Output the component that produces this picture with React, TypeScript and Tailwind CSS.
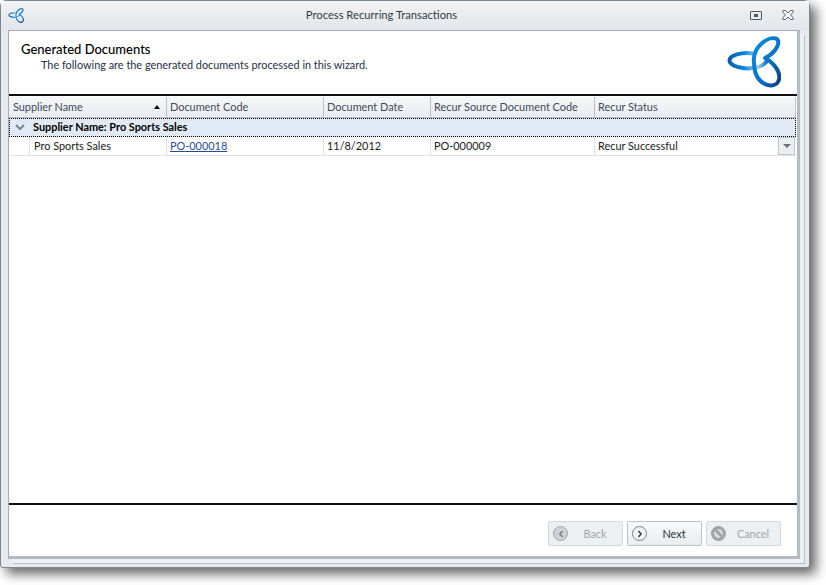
import { ChevronLeft, ChevronRight } from "lucide-react";

const font = { fontFamily: "Lato, sans-serif" };

function Logo({ className, id }: { className: string; id: string }) {
    return (
        <svg viewBox="0 0 54 52" className={className} fill="none">
            <defs>
                <linearGradient id={`${id}A`} x1="0" y1="0" x2="1" y2="1">
                    <stop offset="0" stopColor="#0a8fe6" />
                    <stop offset="0.55" stopColor="#0672c8" />
                    <stop offset="1" stopColor="#0b3f84" />
                </linearGradient>
                <linearGradient id={`${id}B`} x1="0" y1="0" x2="1" y2="0">
                    <stop offset="0" stopColor="#0a5fae" />
                    <stop offset="0.4" stopColor="#0a86dc" />
                    <stop offset="0.75" stopColor="#a8d4f4" />
                    <stop offset="1" stopColor="#0b6ec4" />
                </linearGradient>
            </defs>
            <path d="M27 17.500C14 15.500 2.500 19.500 2.500 24.500C2.500 30 16 33.500 26 32C32 31.500 37 29 40 25" stroke={`url(#${id}B)`} strokeWidth="4" />
            <path d="M27 27C25 11 41 0 49 2.500C55 5 49 17 38 22C47 27 55 37 51.500 45C48 53 33 50 28.500 37C27.500 33 27 30 27 27Z" stroke={`url(#${id}A)`} strokeWidth="4" strokeLinejoin="round" />
        </svg>
    );
}

function HeaderCell({ label, className }: { label: string; className: string }) {
    return (
        <div className={`flex items-center pl-[3px] text-[10.9px] text-[#3f4a5c] border-r border-[#b9c1cb] ${className}`}>
            {label}
        </div>
    );
}

function DataCell({ children, className }: { children: React.ReactNode; className: string }) {
    return (
        <div className={`flex items-center pl-[3px] text-[10.9px] text-[#1a1a1a] border-r border-[#dfe2e5] ${className}`}>
            {children}
        </div>
    );
}

export default function App() {
    return (
        <div className="w-[826px] h-[585px] bg-white overflow-hidden" style={font}>
            <div className="w-[810px] h-[568px] flex flex-col rounded-t-[6px] rounded-b-[3px] border border-[#7d8791] bg-[#e6eaee] shadow-[6px_6px_12px_rgba(0,0,0,0.6)]">
                {/* title bar */}
                <div className="h-[29px] shrink-0 flex items-center pl-[7px] pr-[15px] pb-[1px] bg-gradient-to-b from-[#f1f3f4] to-[#e2e6ea]">
                    <Logo id="small" className="w-[16px] h-[15px]" />
                    <div className="flex-1 text-center text-[11.2px] text-[#333b47] pr-[11px]">Process Recurring Transactions</div>
                    <div className="w-[12px] h-[9px] border border-[#4e5660] rounded-[1px] flex items-center justify-center mr-[20px]">
                        <div className="w-[4px] h-[3px] bg-[#4e5660]" />
                    </div>
                    <svg viewBox="0 0 12 10" className="w-[12px] h-[10px]" fill="#f4f5f6" stroke="#59616b" strokeWidth="1">
                        <path d="M1 .5H3.5L6 3L8.500 .5H11V2.500L8.500 5L11 7.500V9.500H8.500L6 7L3.500 9.500H1V7.500L3.500 5L1 2.500Z" />
                    </svg>
                </div>

                {/* content frame */}
                <div className="flex-1 ml-[7px] mr-[9px] mb-[8px] flex flex-col bg-white border-t border-l border-r-[3px] border-b-[3px] border-t-[#a3abb4] border-l-[#a3abb4] border-r-[#b4bbc3] border-b-[#b4bbc3] shadow-[4px_4px_0_0_#eef1f3,5px_5px_0_0_#b9c0c7]">
                    <div className="h-[63px] shrink-0 relative">
                        <div className="pl-[12px] pt-[10px] text-[13px] leading-[16px] font-medium text-black">Generated Documents</div>
                        <div className="pl-[32px] text-[10.9px] leading-[16px] text-[#1f2f45]">The following are the generated documents processed in this wizard.</div>
                        <Logo id="large" className="absolute right-[16px] top-[5px] w-[54px] h-[52px]" />
                    </div>
                    <div className="h-[2px] shrink-0 bg-[#111111]" />

                    {/* grid */}
                    <div className="flex-1 pr-[1px]">
                        <div className="h-[21px] flex bg-gradient-to-b from-[#f5f6f8] to-[#e9ecf0] border-b border-[#b4bbc4] mt-px">
                            <div className="w-[158px] flex items-center pl-[4px] pr-[6px] justify-between text-[10.9px] text-[#3f4a5c] border-r border-[#b9c1cb]">
                                Supplier Name
                                <div className="w-0 h-0 border-x-[3.5px] border-x-transparent border-b-[4px] border-b-black" />
                            </div>
                            <HeaderCell label="Document Code" className="w-[157px]" />
                            <HeaderCell label="Document Date" className="w-[107px]" />
                            <HeaderCell label="Recur Source Document Code" className="w-[164px]" />
                            <HeaderCell label="Recur Status" className="flex-1" />
                        </div>
                        <div className="h-[19px] flex items-center bg-[#e1eaf4] border border-dotted border-black">
                            <svg viewBox="0 0 10 7" className="w-[10px] h-[7px] ml-[5px] mr-[8px]" fill="none" stroke="#7c8490" strokeWidth="2">
                                <path d="M1 1L5 5L9 1" />
                            </svg>
                            <span className="text-[10.9px] font-bold text-black pb-[1px]">Supplier Name: Pro Sports Sales</span>
                        </div>
                        <div className="h-[19px] flex border-b border-[#dfe2e5]">
                            <div className="w-[21px] border-r border-[#dfe2e5]" />
                            <DataCell className="w-[137px]"><span className="pl-px">Pro Sports Sales</span></DataCell>
                            <DataCell className="w-[157px]"><span className="underline text-[#264a9c]">PO-000018</span></DataCell>
                            <DataCell className="w-[107px]">11/8/2012</DataCell>
                            <DataCell className="w-[164px]">PO-000009</DataCell>
                            <div className="flex-1 flex items-center justify-between pl-[3px] pr-px text-[10.9px] text-[#1a1a1a]">
                                Recur Successful
                                <div className="w-[17px] h-[18px] flex items-center justify-center bg-[#eceff2] border border-[#c0c6cd]">
                                    <div className="w-0 h-0 border-x-[4px] border-x-transparent border-t-[4px] border-t-[#69717c]" />
                                </div>
                            </div>
                        </div>
                    </div>

                    {/* footer */}
                    <div className="h-[2px] shrink-0 bg-[#111111]" />
                    <div className="h-[51px] shrink-0 flex items-start justify-end gap-[4px] pt-[16px] pr-[16px]">
                        <button className="w-[75px] h-[25px] flex items-center rounded-[2px] border border-[#d3d8dd] bg-[#edf0f3] pl-[4px] text-[10.9px] text-[#9ea4ab]">
                            <span className="w-[15px] h-[15px] rounded-full bg-[#cfd2d5] border border-[#a2a6aa] flex items-center justify-center">
                                <ChevronLeft className="w-[10px] h-[10px] text-[#6b7076]" strokeWidth={3} />
                            </span>
                            <span className="flex-1 text-center px-[2px] pt-px">Back</span>
                        </button>
                        <button className="w-[75px] h-[25px] flex items-center rounded-[2px] border border-[#bcc2c9] bg-gradient-to-b from-[#f8f9fa] to-[#e9edf1] pl-[4px] text-[10.9px] text-[#25303d]">
                            <span className="w-[15px] h-[15px] rounded-full bg-[#f1f2f3] border border-[#7d8186] flex items-center justify-center">
                                <ChevronRight className="w-[10px] h-[10px] text-[#25292e]" strokeWidth={3} />
                            </span>
                            <span className="flex-1 text-center px-[2px] pt-px">Next</span>
                        </button>
                        <button className="w-[75px] h-[25px] flex items-center rounded-[2px] border border-[#d3d8dd] bg-[#edf0f3] pl-[4px] text-[10.9px] text-[#9ea4ab]">
                            <span className="relative w-[15px] h-[15px] rounded-full border-[3px] border-[#a0a4a8] bg-[#d8dadc] overflow-hidden">
                                <span className="absolute left-[-2px] top-[3px] w-[14px] h-[3px] bg-[#a0a4a8] rotate-45" />
                            </span>
                            <span className="flex-1 text-center px-[2px] pt-px">Cancel</span>
                        </button>
                    </div>
                </div>
            </div>
        </div>
    );
}
